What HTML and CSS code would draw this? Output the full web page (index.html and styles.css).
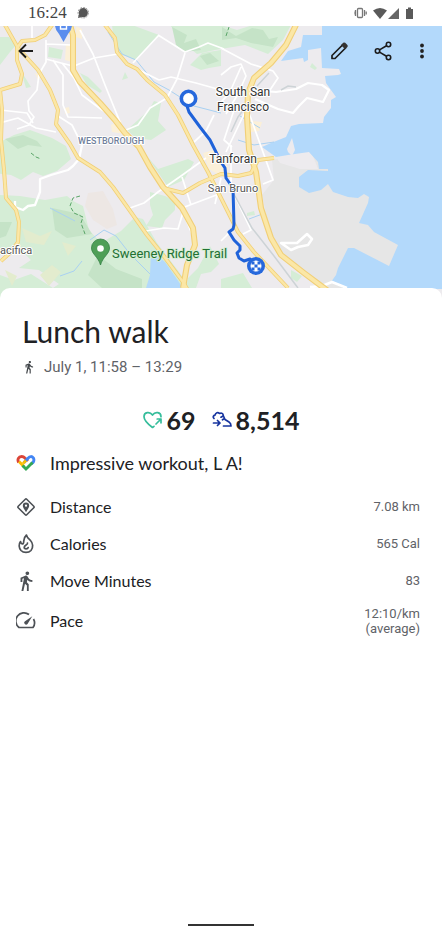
FILE: index.html
```html
<!DOCTYPE html>
<html lang="en">
  <head>
    <meta charset="utf-8" />
    <meta name="viewport" content="width=device-width, initial-scale=1" />
    <title>Lunch walk</title>
    <link rel="stylesheet" href="styles.css">
  </head>
  <body>
    <header class="status-bar">
      <span class="clock">16:24</span>
      <svg class="chat" width="12" height="12" viewBox="0 0 12 12">
        <circle cx="6.3" cy="5.7" r="4.6" fill="#555" />
        <path d="M1 11l1-4 3 3z" fill="#555" />
        <circle cx="6.3" cy="5.7" r="5.3" fill="none" stroke="#777" stroke-width=".7" stroke-dasharray="2 1" />
      </svg>
      <svg class="system-icons" width="62" height="14" viewBox="0 0 62 14">
        <g fill="none" stroke="#777" stroke-width="1.3">
          <rect x="3.5" y="2.5" width="5" height="9" rx="1" />
          <path d="M1.500 4v6M10.500 4v6M-.2 5.500v3M12.200 5.500v3" />
        </g>
        <path d="M19 4.500Q26 -.5 33 4.500L26 13z" fill="#5a5a5a" />
        <path d="M45 2v11H34z" fill="#666" />
        <path d="M52 3h2V1.500h3V3h2v10h-7z" fill="#5a5a5a" />
      </svg>
    </header>

    <section class="map">
      <svg class="map-art" viewBox="0 26 442 274" preserveAspectRatio="xMidYMin slice">
        <rect y="25" width="442" height="275" fill="#edebee" />

        <!-- parks and hills -->
        <g fill="#d5edd6">
          <path d="M0 142l14-7 16-5 22 8 14 8 5 13-14 12-14 5-10-4-12 8-10-5-17-2z" />
          <path d="M0 195l20 1 25 4 22-4 6 5 10 5 6 24 12 13 20-12 14-14 8 2 14 24 22 29 18 26H0v-23l14 5 17-6 22 14 6-4-20-14-20-2 12-8-6-6-25 1z" />
          <path d="M112 25h20l27 10-24 25-20-8z" />
          <path d="M170 25h51l16 5 16-5h38l-8 15-15 14-23-9-30 5-18 4-11-9z" />
          <path d="M190 65l12-12 19-3v16l-12 2-8 2z" />
          <path d="M127 130l22-20 5-9 7 2-3 18 8 9-15 10-15-2z" />
          <path d="M0 37h9l8 7-7 8-10 13z" />
          <path d="M21 71l10 16-5 1z" />
          <path d="M49 47l14 3-2 9-13-2z" />
          <path d="M80 73l8 4 14 14-2 2-13-8z" />
          <path d="M125 72l3 6-6 2z" />
          <path d="M146 155l12 14 30-10 6 3-10 18-16 7z" />
          <path d="M150 192l15 4 10 5v9l-10 10-3 8-16-2 7-11-3-10z" />
          <path d="M188 278l10-10 12-22 9 18-8 8-10 2-5 14h-10z" />
          <path d="M221 279l22-6 9 15h-31zM291 270l11 6-5 6-6-4zM247 213l7-2 1 4-8 1z" />
        </g>
        <g fill="#c5e3c7">
          <path d="M172 27l15 8-3 8 12-4 5 11-17 2-8-7z" />
          <path d="M222 27l14 9 16-8 11 2 6 9 9-2-5 10-22-4-15-5-14 2z" />
          <path d="M5 139l18-4 14 6 5 6-14-2-10 4z" />
          <path d="M52 208l28 6 12 20-25 4-12-8zM0 222l12 0-6 14-6 2zM98 255l18 14 26 10v9h-40l-14-13z" />
          <path d="M200 56l10-3 9 8-12 4z" />
        </g>
        <g fill="#e3ecce">
          <path d="M22 228l18 8 12-5-8 14-18-3zM40 275l12-10 9 7-12 14zM62 242l14 4-8 10zM5 270l12 6-5 10z" />
        </g>
        <path d="M88 193l15-2 10 18 4 16-10 4-14-9-8-14z" fill="#ede7e4" />
        <g fill="#fbf0d8">
          <path d="M66 44h6v18l-7-2zM76 26l6 3v10l-6-2zM111 125l10-5 3 14-12-2zM35 73l8 3-5 4zM65 108l4-1 1 6-5 1z" />
          <path d="M203 153l14-4 12 20-10 6-10-6zM250 121l12 1-3 9-8 1z" />
        </g>

        <!-- airport and bay -->
        <path d="M262 195L274 180 272 160 309 152 400 180V272L346 289H324L281 255 271 238z" fill="#e6e6e6" />
        <path d="M276 157L288 155 309 152 313 156 318 169H300L280 163z" fill="#edebee" />
        <path d="M322 25V35H303L301 47 288 51 281 61 303 58 304 62 308 60V50L321 48 322 68 339 69 341 74 338 75 325 76 326 83 336 97 331 100V108L324 117 323 123 299 124 291 126 286 137 271 143 262 147 276 157 288 155 309 152 318 162 319 169H328V171L308 170 299 177V187L309 193 321 190 328 184 333 192 348 197 358 198 364 194 369 197 368 203 359 223 368 225 374 232 398 245 389 266 354 248H348L338 268 336 275 331 282 346 289H442V25z" fill="#b3d9fb" />
        <path d="M287 149l5-11 3 12-3 6-4-4z" fill="#edebee" />
        <path d="M312 63l5 5-2 2-5-3z" fill="#d5edd6" />
        <path d="M151 250l14 12 18 26h-37l4-13z" fill="#b3d9fb" />
        <g fill="none" stroke="#a9d1f2" stroke-width="1">
          <path d="M108 32l14 22 14 6 18 22 15 8 25 16 27 7M50 208l25 13M90 240l14-10 12 6 14 18 20 20M60 276l14-5 8-10M240 116l20 12M238 140l16 5 20-3M249 219l16-6" />
        </g>

        <!-- local streets -->
        <g fill="none" stroke="#fff" stroke-width="1.700" stroke-linejoin="round">
          <path d="M32 25v13M46 40v22l-7 12-2 16-9 11 1 10 5 6-5 8-12 4M46 44l25 1M46 59l15 4 12 3M53 60l10 15v30l5 12 34 1M62 63l12 15 8 17 20 15 15 8M74 66l20-8 24-4M80 30l13 24 12 31 15 37" />
          <path d="M0 110l27 3 6 10M0 123l18-5 18 10 20 4M58 116l14 9 10 20" />
          <path d="M159 35l-26 28M158 35l27 17 14-5 9-4 16 6M185 53l-8 26-10 19-17 10-12 17-12 5M159 80l12-3 25 6 25 7M137 69l22 11M214 115l-8 16-12 11" />
          <path d="M221 48l30 16 22 7 5 7-10 15M221 75l10-8 10-3 5 12-8 18-12 20M241 67l-12 27-8 8M246 110l-20 42M234 110l-10 30 8 7" />
          <path d="M252 90l24 2 20-3 12-6 14 2 7 5-6 12-16-4-8 8-6 7-15-4-23-10" stroke-width="2.200" />
          <path d="M249 113l24 67-10 4M231 145v45M232 190l19 40-8 4" />
          <path d="M130 208l14-5 14-11 23-16 25-18M146 231l18-3 14 1 6-20M182 208l37-14M182 177l9 28M221 178l-6 26M221 241l8-8" />
          <path d="M82 145l-3 14-6 7-5 4-17 5-11 4v13l-5 13-7 1-5 4-8-3v-6" stroke-width="2.300" />
          <path d="M141 148l4 12 5 7M182 208l10 25M281 243h16l10-9 5 5-4 6-10 2-7 3z" stroke-width="2.500" />
          <path d="M310 287l12-1 10-4 15 6" stroke-width="2.500" />
        </g>
        <g fill="none" stroke="#cdd3d6" stroke-width="1.500">
          <path d="M247 105l-9 12-7 15M234 194l18 34 22 28 24 32M257 86l12-13M281 90l7-4 8 1" />
        </g>
        <g fill="none" stroke="#5aa568" stroke-width="1" stroke-dasharray="4 2">
          <path d="M80 196l-7 2-3 8 4 7 9 4-2 6 4 11M31 153l5 4 5 2M226 36l3-9" />
        </g>

        <!-- highways: casing first, then fill -->
        <defs>
          <g id="roads">
            <path d="M5 25l13 23 20 22 12 20 8 20-2 14 14 20 8 14 22 14 13 15 15 21 19 27 16 20 20 27 6 10" />
            <path d="M52 25l-7 10-10 5-13 1-5 7v12l5 14-2 10-10 3-10 3 2 20-1 30 3 30 2 28 10 12 3 12-1 20-7 10-10 9" />
            <path d="M105 25l10 13 2 14 10 12 10 5 10 11 18 15 13 20 15 30 15 27 13 26 17 34 16 20 34 36" />
            <path d="M163 188l20 5 17-10 21-9 17 2 13-3 7-13 16-2" />
          </g>
          <g id="freeways">
            <path d="M70 25l3 10v35l7 12 20 21 15 17 10 13 14 14 11 20 13 20 19 21 11 20 2 17-8 20-4 23" />
            <path d="M296 25l-10 20-15 18-17 15-6 15-1 24 2 33 7 22 5 36 10 30 10 17 23 18 24 18" />
          </g>
        </defs>
        <g fill="none" stroke="#f1cf77" stroke-linejoin="round">
          <use href="#roads" stroke-width="4" />
          <use href="#freeways" stroke-width="6" />
        </g>
        <g fill="none" stroke="#fbe7a6" stroke-linejoin="round">
          <use href="#roads" stroke-width="2.500" />
          <use href="#freeways" stroke-width="3.800" />
        </g>

        <!-- pins -->
        <path d="M55 25h17q0 5-4 9l-4.500 8-4.500-8q-4-4-4-9z" fill="#5a8dee" />
        <path d="M60.500 25v4h6v-4" fill="none" stroke="#fff" stroke-width="1.400" />
        <path d="M100.500 265c-2-8-9-11-9-17a9 9 0 0 1 18 0c0 6-7 9-9 17z" fill="#4f9f57" stroke="#328044" stroke-width=".8" />
        <circle cx="100.500" cy="248.500" r="3.300" fill="#fff" />

        <!-- walked route -->
        <path d="M187 106l2 6 11 15 10 13 11 22 4 6 1 10 7 10 1 37-1 4-4 3 5 8 6 6v4l-3 3 2 5 5 3 6-2 7 5" fill="none" stroke="#1f62d9" stroke-width="3" stroke-linejoin="round" />
        <circle cx="188.500" cy="98.500" r="7.200" fill="#fff" stroke="#2668dc" stroke-width="3.600" />
        <circle cx="256" cy="266" r="9" fill="#2668dc" />
        <circle cx="256" cy="266" r="5.500" fill="#fff" />
        <path d="M254.500 264.500h3v3h-3zM251.500 261.500h3v3h-3zM257.500 261.500h3v3h-3zM251.500 267.500h3v3h-3zM257.500 267.500h3v3h-3z" fill="#2668dc" />

        <!-- place names -->
        <g class="place">
          <text x="243" y="96" text-anchor="middle">South San</text>
          <text x="243" y="111" text-anchor="middle">Francisco</text>
          <text x="233" y="163" text-anchor="middle">Tanforan</text>
          <text class="place-small" x="233" y="192" text-anchor="middle">San Bruno</text>
          <text class="place-small" x="0" y="254">acifica</text>
          <text class="district" x="111" y="144" text-anchor="middle">WESTBOROUGH</text>
          <text class="trail" x="112" y="258">Sweeney Ridge Trail</text>
        </g>
      </svg>

      <nav class="toolbar">
        <button type="button" aria-label="Back">
          <svg width="24" height="24" viewBox="0 0 24 24" fill="none" stroke="#1c1c1c" stroke-width="1.800"><path d="M19 12H6M12 5.500L5.500 12l6.500 6.500" /></svg>
        </button>
        <button type="button" class="edit" aria-label="Edit">
          <svg width="24" height="24" viewBox="0 0 24 24"><path d="M5 16.500L15.500 6l3 3L8 19.500H5z" fill="none" stroke="#1c1c1c" stroke-width="1.700" stroke-linejoin="round" /><path d="M14 6l2.200-2.200q1-.8 2 0l2.200 2.200q.8 1 0 2L18.200 10.200z" fill="#333" /></svg>
        </button>
        <button type="button" aria-label="Share">
          <svg width="24" height="24" viewBox="0 0 24 24" fill="none" stroke="#1c1c1c" stroke-width="1.600"><circle cx="17.500" cy="5.500" r="2.200" /><circle cx="6.500" cy="12" r="2.200" /><circle cx="17.500" cy="18.500" r="2.200" /><path d="M8.500 10.900l7-4.200M8.500 13.100l7 4.200" /></svg>
        </button>
        <button type="button" aria-label="More options">
          <svg width="24" height="24" viewBox="0 0 24 24" fill="#222"><circle cx="12" cy="6.500" r="1.900" /><circle cx="12" cy="12" r="1.900" /><circle cx="12" cy="17.500" r="1.900" /></svg>
        </button>
      </nav>
    </section>

    <main class="sheet">
      <h1>Lunch walk</h1>
      <p class="when">
        <svg width="14" height="14" viewBox="0 0 24 24" fill="#43474b"><path d="M13.500 5.500c1.100 0 2-.9 2-2s-.9-2-2-2-2 .9-2 2 .9 2 2 2zM9.800 8.900L7 23h2.100l1.800-8 2.100 2v6h2v-7.500l-2.100-2 .6-3C14.800 12 16.800 13 19 13v-2c-1.900 0-3.500-1-4.300-2.400l-1-1.600c-.4-.6-1-1-1.700-1-.3 0-.5.100-.8.100L6 8.300V13h2V9.600l1.800-.7" /></svg>
        July 1, 11:58 – 13:29
      </p>

      <div class="scores">
        <span class="score">
          <svg width="20" height="18" viewBox="0 0 20 18" fill="none" stroke="#35bd9b" stroke-width="1.700" stroke-linecap="round" stroke-linejoin="round"><path d="M11 15.300l-1.500 1.200Q1 10 1 5.700C1 1 6.800.2 9.500 4 12.200.2 18 1 18 5.700M13 13l5-5M14.200 8H18v3.800" /></svg>
          69
        </span>
        <span class="score">
          <svg width="20" height="18" viewBox="0 0 20 18" fill="none" stroke="#17349f" stroke-width="1.700" stroke-linecap="round" stroke-linejoin="round"><path d="M2 7.500C.5 6 1.500 4.500 3 4.200 3.500 1.500 6 .8 7.500 2.500c2-1 3.800 0 3.700 2L13 8.500l4 2.500q2 1.200 2 4h-7.500M11 5L9 6.200M12.500 7.500l-2 1.300M1.500 12H8M5.500 9.500L8 12l-2.500 2.500" /></svg>
          8,514
        </span>
      </div>

      <p class="praise">
        <svg width="20" height="18" viewBox="0 0 20 18" fill="none" stroke-width="2.900">
          <path d="M2.700 8.500C1 5.500 2.500 2.500 5.700 2.500q1.800 0 3.200 1.500L12 7" stroke="#db4437" />
          <path d="M8 8.500l4-4.300C14 2 16 2.200 17.300 3.800q1.200 2 0 4.200L15.300 10" stroke="#4285f4" />
          <path d="M3 7.500L8.300 13" stroke="#fbbc04" />
          <path d="M6.500 11.500L10 15l6.500-6.500" stroke="#34a853" />
          <path d="M7 9.500l3-3" stroke="#fbbc04" />
        </svg>
        Impressive workout, L A!
      </p>

      <dl class="stats">
        <div class="stat">
          <dt>
            <svg width="20" height="20" viewBox="0 0 20 20"><rect x="4" y="4" width="12" height="12" rx="1" transform="rotate(45 10 10)" fill="none" stroke="#4d5156" stroke-width="1.600" /><path d="M10 15.200C8.800 12.700 6.800 11 6.800 8.800a3.200 3.200 0 0 1 6.400 0c0 2.200-2 3.900-3.200 6.400z" fill="#4d5156" /><circle cx="10" cy="8.700" r="1.100" fill="#fff" /></svg>
            Distance
          </dt>
          <dd>7.08 km</dd>
        </div>
        <div class="stat">
          <dt>
            <svg width="20" height="20" viewBox="0 0 20 20" fill="none" stroke="#4d5156" stroke-width="1.700" stroke-linecap="round" stroke-linejoin="round"><path d="M10.500 1C7 4 8.300 7 7.300 9.500 6 10.500 4.800 9.500 4.500 7.500 2.500 10 2.800 14 5 16.500c2.500 2.600 7.500 2.600 10 0 2.500-3 2-7.500-.5-10C12.500 4.800 10.800 3.500 10.500 1z" /><path d="M11.500 9c.5 2-3.500 2-3.300 4.500 0 1.700 3.600 1.700 4 0" /></svg>
            Calories
          </dt>
          <dd>565 Cal</dd>
        </div>
        <div class="stat">
          <dt>
            <svg width="20" height="20" viewBox="1 1 22 22" fill="#4d5156"><path d="M13.500 5.500c1.100 0 2-.9 2-2s-.9-2-2-2-2 .9-2 2 .9 2 2 2zM9.800 8.900L7 23h2.100l1.800-8 2.100 2v6h2v-7.500l-2.100-2 .6-3C14.800 12 16.800 13 19 13v-2c-1.900 0-3.500-1-4.300-2.400l-1-1.600c-.4-.6-1-1-1.700-1-.3 0-.5.100-.8.100L6 8.300V13h2V9.600l1.800-.7" /></svg>
            Move Minutes
          </dt>
          <dd>83</dd>
        </div>
        <div class="stat">
          <dt>
            <svg width="20" height="20" viewBox="0 0 20 20"><path d="M13 3.500A8 8 0 0 0 3 16.500h14a8 8 0 0 0 .5-8.500" fill="none" stroke="#4d5156" stroke-width="1.700" stroke-linejoin="round" /><path d="M16.300 5.200L11.500 13a1.900 1.900 0 0 1-2.800-2.600z" fill="#4d5156" /></svg>
            Pace
          </dt>
          <dd>12:10/km<br />(average)</dd>
        </div>
      </dl>

      <div class="home-bar"></div>
    </main>
  </body>
</html>
```

FILE: styles.css
```css
body {
  margin: 0;
  min-height: 100vh;
  display: flex;
  flex-direction: column;
  font-family: Roboto, sans-serif;
  color: #202124;
  background: #fff;
}
svg {
  flex-shrink: 0;
}
.status-bar {
  display: flex;
  align-items: center;
  height: 26px;
  padding: 0 26px 0 28px;
  color: #444;
}
.clock {
  font-family: "Liberation Serif", serif;
  font-size: 17px;
}
.chat {
  margin-left: 10px;
}
.system-icons {
  margin-left: auto;
}
.map {
  position: relative;
  height: 274px;
  overflow: hidden;
}
.map-art {
  display: block;
  width: 100%;
  height: 100%;
}
.place {
  font-size: 12px;
  fill: #333;
  stroke: #fff;
  stroke-width: 2px;
  stroke-linejoin: round;
  paint-order: stroke;
}
.place-small {
  font-size: 11px;
  fill: #555;
}
.district {
  font-size: 9px;
  font-weight: 500;
  fill: #71809b;
}
.trail {
  font-size: 13px;
  fill: #227032;
  stroke: #d5edd6;
}
/* buttons float over the map */
.toolbar {
  position: absolute;
  top: 0;
  left: 0;
  right: 0;
  display: flex;
  align-items: center;
  padding: 13px 8px 0 14px;
}
.toolbar button {
  display: flex;
  padding: 0;
  border: 0;
  background: none;
  margin-left: 15px;
}
.toolbar button:first-child {
  margin-left: 0;
}
.toolbar .edit {
  margin-left: auto;
  margin-right: 5px;
}
.sheet {
  position: relative;
  flex: 1;
  display: flex;
  flex-direction: column;
  margin-top: -12px;
  padding-top: 24px;
  border-radius: 10px 10px 0 0;
  background: #fff;
}
h1 {
  margin: 0 22px;
  font-family: Lato, sans-serif;
  font-size: 30px;
  font-weight: 400;
  line-height: 38px;
}
.when {
  display: flex;
  align-items: center;
  gap: 8px;
  margin: 7px 22px 0;
  font-size: 15px;
  line-height: 20px;
  color: #5f6368;
}
.scores {
  display: flex;
  justify-content: center;
  gap: 16px;
  margin-top: 28px;
}
.score {
  display: flex;
  align-items: center;
  gap: 4px;
  font-family: Lato, sans-serif;
  font-size: 25px;
  font-weight: 700;
  line-height: 30px;
}
.praise {
  display: flex;
  align-items: center;
  gap: 14px;
  margin: 16px 16px 0;
  font-family: Lato, sans-serif;
  font-size: 18px;
  line-height: 24px;
}
.stats {
  margin: 13px 22px 0 16px;
}
.stat {
  display: flex;
  align-items: center;
  justify-content: space-between;
  box-sizing: border-box;
  min-height: 37px;
  padding: 7px 0;
}
dt {
  display: flex;
  align-items: center;
  gap: 14px;
  font-family: Lato, sans-serif;
  font-size: 16px;
  line-height: 20px;
}
dd {
  margin: 0;
  font-size: 13px;
  line-height: 15px;
  text-align: right;
  color: #5f6368;
}
.home-bar {
  width: 66px;
  height: 2px;
  margin: auto auto 6px;
  background: #333;
}
```
